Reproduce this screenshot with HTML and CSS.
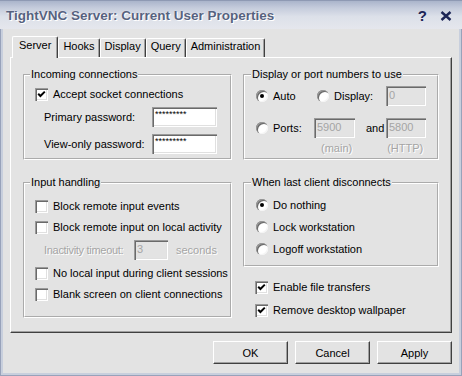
FILE: index.html
```html
<!DOCTYPE html>
<html lang="en">
<head>
    <meta charset="UTF-8">
    <title>TightVNC Server: Current User Properties</title>
    <link rel="stylesheet" href="styles.css">
</head>
<body>

<div class="window">
    <div class="titlebar">
        <span class="title">TightVNC Server: Current User Properties</span>
        <span class="help">?</span>
        <span class="close">
            <svg width="12" height="10" viewBox="0 0 12 10"><path d="M1.5 1 L10.5 9 M10.5 1 L1.5 9" stroke="#1c2556" stroke-width="2.4" fill="none"/></svg>
        </span>
    </div>

    <div class="dialog">
        <div class="tabs">
            <div class="tab active">Server</div>
            <div class="tab">Hooks</div>
            <div class="tab">Display</div>
            <div class="tab">Query</div>
            <div class="tab">Administration</div>
        </div>

        <div class="pane">
            <fieldset class="group incoming">
                <legend>Incoming connections</legend>
                <label class="check">
                    <span class="box"><svg width="13" height="13" viewBox="0 0 13 13"><path d="M3.2 5.8 L5.4 8 L9.8 3.6" stroke="#000" stroke-width="2" fill="none"/></svg></span>
                    Accept socket connections
                </label>
                <div class="field">
                    <span class="field-label">Primary password:</span>
                    <span class="edit secret">*********</span>
                </div>
                <div class="field">
                    <span class="field-label">View-only password:</span>
                    <span class="edit secret">*********</span>
                </div>
            </fieldset>

            <fieldset class="group ports">
                <legend>Display or port numbers to use</legend>
                <div class="port-row">
                    <label class="option opt-auto"><span class="radio on"></span>Auto</label>
                    <label class="option opt-display"><span class="radio"></span>Display:</label>
                    <span class="edit off port">0</span>
                </div>
                <div class="port-row">
                    <label class="option opt-ports"><span class="radio"></span>Ports:</label>
                    <span class="edit off port main">5900</span>
                    <span class="and">and</span>
                    <span class="edit off port">5800</span>
                </div>
                <div class="hint-row">
                    <span class="hint main-hint">(main)</span>
                    <span class="hint http-hint">(HTTP)</span>
                </div>
            </fieldset>

            <fieldset class="group input">
                <legend>Input handling</legend>
                <label class="check"><span class="box"></span>Block remote input events</label>
                <label class="check"><span class="box"></span>Block remote input on local activity</label>
                <div class="field">
                    <span class="field-label timeout disabled">Inactivity timeout:</span>
                    <span class="edit off seconds">3</span>
                    <span class="unit disabled">seconds</span>
                </div>
                <label class="check"><span class="box"></span>No local input during client sessions</label>
                <label class="check"><span class="box"></span>Blank screen on client connections</label>
            </fieldset>

            <div class="side">
                <fieldset class="group disconnect">
                    <legend>When last client disconnects</legend>
                    <label class="option"><span class="radio on"></span>Do nothing</label>
                    <label class="option"><span class="radio"></span>Lock workstation</label>
                    <label class="option"><span class="radio"></span>Logoff workstation</label>
                </fieldset>
                <label class="check">
                    <span class="box"><svg width="13" height="13" viewBox="0 0 13 13"><path d="M3.2 5.8 L5.4 8 L9.8 3.6" stroke="#000" stroke-width="2" fill="none"/></svg></span>
                    Enable file transfers
                </label>
                <label class="check">
                    <span class="box"><svg width="13" height="13" viewBox="0 0 13 13"><path d="M3.2 5.8 L5.4 8 L9.8 3.6" stroke="#000" stroke-width="2" fill="none"/></svg></span>
                    Remove desktop wallpaper
                </label>
            </div>
        </div>

        <div class="buttons">
            <button>OK</button>
            <button>Cancel</button>
            <button>Apply</button>
        </div>
    </div>
</div>

</body>
</html>
```

FILE: styles.css
```css
/* Page */
body {
    margin: 0;
    font-family: 'Liberation Sans', Arial, sans-serif;
    font-size: 11px;
    line-height: 13px;
    color: #000;
}

/* Window frame */
.window {
    width: 462px;
    height: 376px;
    display: flex;
    flex-direction: column;
    background: #c8cfdd;
    box-shadow: inset 0 0 0 1px #98a2ba;
}

.titlebar {
    height: 29px;
    flex: none;
    display: flex;
    align-items: center;
    padding: 1px 10px 0 6px;
    box-sizing: border-box;
    background: linear-gradient(to bottom, #aab4cb 0%, #c5ccdc 25%, #dce0e9 55%, #e5e7ed 100%);
    border-top: 1px solid #8e99b3;
}
.title {
    flex: 1;
    font-size: 13.5px;
    font-weight: bold;
    color: #56627f;
    text-shadow: 1px 1px 0 #fff, 0 0 1px #fff;
}
.help {
    font-size: 15px;
    font-weight: bold;
    color: #1c2556;
    margin-right: 13px;
}
.close svg {
    display: block;
}

.dialog {
    flex: 1;
    margin: 0 3px 3px;
    padding: 7px 7px 0;
    background: #e3e3e3;
}

/* Tabs */
.tabs {
    display: flex;
    align-items: flex-end;
    height: 22px;
    padding-left: 2px;
    margin-bottom: -1px;
}
.tab {
    height: 20px;
    box-sizing: border-box;
    padding: 1px 4px 0;
    border: 1px solid #fff;
    border-bottom: 0;
    border-right-color: #404040;
    border-radius: 2px 2px 0 0;
    box-shadow: inset -1px 0 0 #a0a0a0;
}
.tab.active {
    height: 22px;
    padding: 2px 6px 0;
    position: relative;
    z-index: 1;
    background: #e3e3e3;
}

.pane {
    position: relative;
    display: grid;
    grid-template-columns: 209px 196px;
    column-gap: 11px;
    row-gap: 16px;
    padding: 10px 12px 14px;
    border: 1px solid;
    border-color: #fff #404040 #404040 #fff;
    box-shadow: inset -1px -1px 0 #a0a0a0;
}

/* Group boxes */
.group {
    margin: 0;
    min-width: 0;
    padding: 5px 4px 4px 10px;
    border: 2px groove #fff;
    display: flex;
    flex-direction: column;
}
.group legend {
    padding: 0 1px;
    margin-left: -5px;
}
.incoming .field {
    margin-top: 5px;
}
.incoming .field + .field {
    margin-top: 7px;
}
.ports {
    padding: 5px 4px 3px 11px;
}
.port-row {
    display: flex;
    align-items: center;
    height: 20px;
}
.port-row + .port-row {
    margin-top: 12px;
}
.hint-row {
    display: flex;
    margin-top: 4px;
}
.input {
    padding: 9px 0 14px 10px;
    gap: 5px;
}
.disconnect {
    padding: 8px 4px 8px 11px;
    gap: 6px;
}
.side {
    display: flex;
    flex-direction: column;
}
.side .check {
    margin-left: 12px;
    margin-top: 7px;
}
.side .group + .check {
    margin-top: 12px;
}

/* Check boxes and radio buttons */
.check,
.option {
    display: flex;
    align-items: center;
    gap: 5px;
    height: 16px;
    flex: none;
    white-space: nowrap;
}
.box {
    width: 13px;
    height: 13px;
    flex: none;
    background: #fff;
    box-shadow: inset 1px 1px 0 #9a9a9a, inset 2px 2px 0 #6a6a6a, inset -1px -1px 0 #fff, inset -2px -2px 0 #e0e0e0;
}
.box svg {
    display: block;
}
.radio {
    width: 12px;
    height: 12px;
    flex: none;
    border-radius: 50%;
    background: #fff;
    box-shadow: inset 1px 1px 0 #9a9a9a, inset 2px 2px 0 #6a6a6a, inset -1px -1px 0 #f4f4f4;
    display: flex;
    align-items: center;
    justify-content: center;
}
.radio.on::after {
    content: "";
    width: 4px;
    height: 4px;
    border-radius: 50%;
    background: #000;
}
.opt-auto { width: 61px; }
.opt-display { width: 69px; }
.opt-ports { width: 58px; }

/* Edit fields */
.field {
    display: flex;
    align-items: center;
    padding-left: 9px;
    white-space: nowrap;
}
.field-label {
    width: 108px;
}
.field-label.timeout {
    width: 90px;
    letter-spacing: -0.3px;
}
.edit {
    width: 65px;
    height: 20px;
    flex: none;
    box-sizing: border-box;
    padding: 0 3px;
    line-height: 19px;
    background: #fff;
    box-shadow: inset 1px 1px 0 #9a9a9a, inset 2px 2px 0 #6a6a6a, inset -1px -1px 0 #fff, inset -2px -2px 0 #e0e0e0;
}
.edit.secret {
    font-size: 9px;
    line-height: 15px;
}
.edit.off {
    background: #e3e3e3;
    color: #a5a5a5;
}
.edit.port { width: 40px; }
.edit.port.main { width: 41px; }
.edit.seconds { width: 34px; }
.and {
    width: 18px;
    margin: 0 2px 0 11px;
}
.unit {
    margin-left: 8px;
}
.disabled,
.hint {
    color: #a5a5a5;
    text-shadow: 1px 1px 0 #fff;
}
.main-hint { margin-left: 65px; }
.http-hint { margin-left: 35px; }

/* Dialog buttons */
.buttons {
    display: flex;
    justify-content: flex-end;
    gap: 7px;
    margin-top: 8px;
}
button {
    width: 75px;
    height: 23px;
    padding: 0;
    font-family: inherit;
    font-size: 11px;
    color: #000;
    background: #e3e3e3;
    border: 1px solid;
    border-color: #fff #404040 #404040 #fff;
    box-shadow: inset -1px -1px 0 #a0a0a0;
}
```
